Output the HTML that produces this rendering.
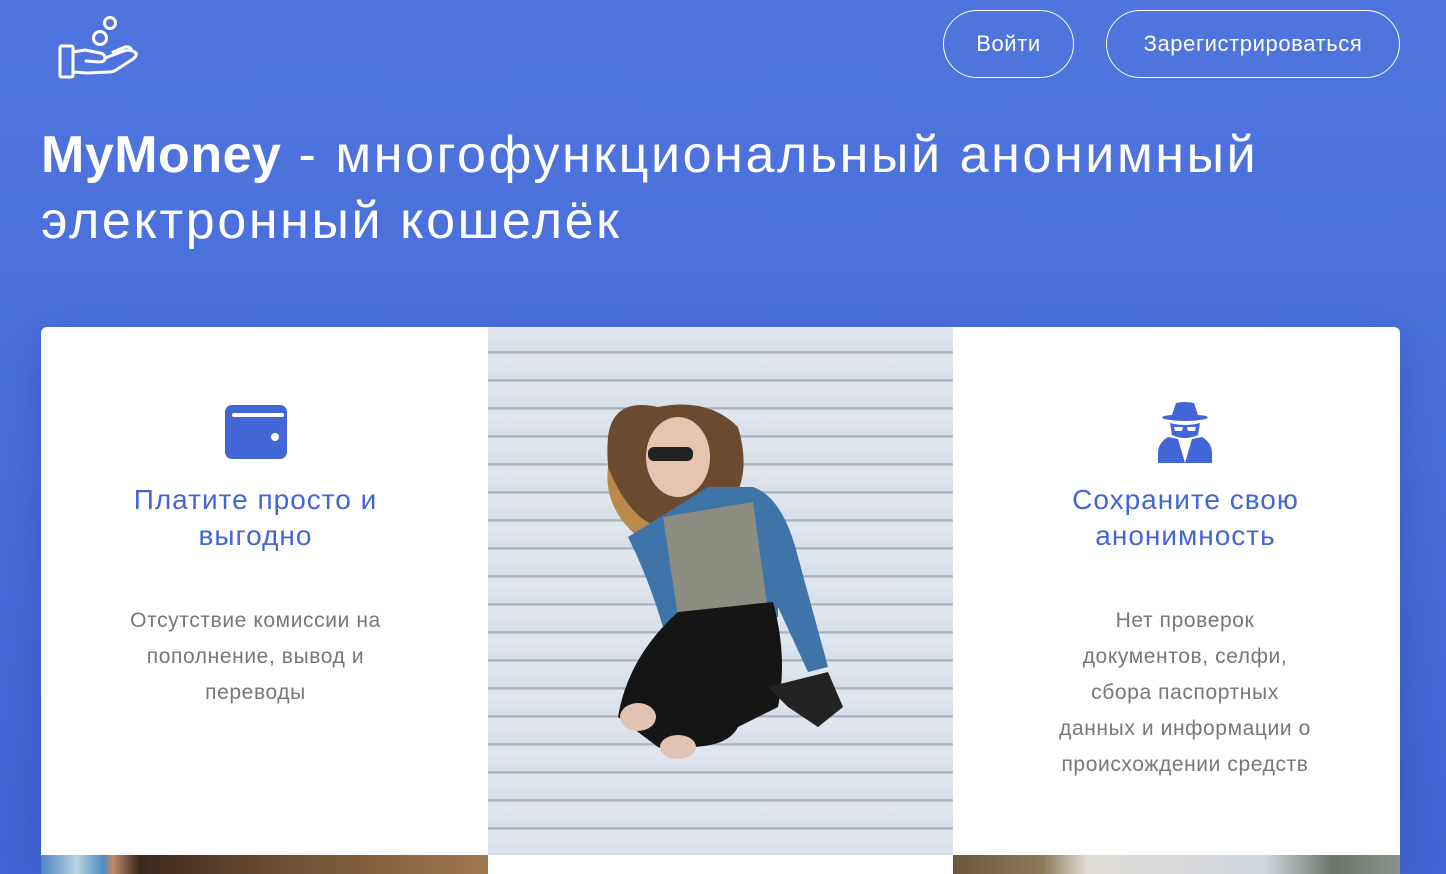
<!DOCTYPE html>
<html><head><meta charset="utf-8"><style>
*{margin:0;padding:0;box-sizing:border-box}
body{width:1446px;height:874px;overflow:hidden;background:linear-gradient(180deg,#5075de 0%,#4a6fdb 40%,#4165d2 100%);font-family:"Liberation Sans",sans-serif;position:relative;color:#fff}
.btn{position:absolute;top:10px;height:68px;border:1.5px solid #fff;border-radius:34px;font-size:22px;letter-spacing:0.6px;display:flex;align-items:center;justify-content:center;color:#fff}
h1{position:absolute;left:41px;top:122px;font-size:52px;font-weight:400;line-height:66px;letter-spacing:2.6px;white-space:nowrap}
h1 b{font-weight:700;letter-spacing:0.5px}
.card{position:absolute;left:41px;top:327px;width:1359px;height:528px;background:#fff;border-radius:6px 6px 0 0;overflow:hidden;box-shadow:0 10px 40px rgba(30,50,140,.3)}
.col{position:absolute;top:0;width:447px;height:528px;text-align:center}
.t{color:#4366d6;font-size:28px;line-height:36px;letter-spacing:1px}
.d{color:#777;font-size:21px;line-height:36px;letter-spacing:0.6px}
.photo{position:absolute;left:447px;top:0;width:465px;height:528px;background:repeating-linear-gradient(180deg,#e2e7ef 0,#d8dee8 24px,#9aa0aa 25px,#d8dee8 27px,#e2e7ef 28px)}
</style></head><body>
<svg style="position:absolute;left:55px;top:14px" width="86" height="68" viewBox="0 0 86 68" fill="none" stroke="#fff" stroke-width="3" stroke-linejoin="round" stroke-linecap="round">
<circle cx="55" cy="9" r="5.5"/><circle cx="45" cy="24" r="6.5"/>
<rect x="5" y="32" width="13" height="31" rx="1.5"/>
<path d="M18 38 L30 36 L45 39 Q50 40 50 44 Q50 48 44 48 L31 47 M50 44 L66 38 Q75 34 81 39 Q82 42 78 45 L61 56 Q58 58 54 58 L32 59 L18 58"/>
<path d="M58 38 L70 33 Q74 32 76 35"/>
</svg>
<div class="btn" style="left:943px;width:131px">Войти</div>
<div class="btn" style="left:1106px;width:294px">Зарегистрироваться</div>
<h1><b>MyMoney</b> - многофункциональный анонимный<br>электронный кошелёк</h1>
<div class="card">
<div class="col" style="left:-9px">
<svg style="position:absolute;left:193px;top:78px" width="62" height="54" viewBox="0 0 62 54"><rect x="0" y="0" width="62" height="54" rx="7" fill="#4366d6"/><rect x="7" y="8" width="52" height="4" rx="2" fill="#fff"/><circle cx="50" cy="32" r="4" fill="#fff"/></svg>
<div class="t" style="position:absolute;top:155px;width:100%">Платите просто и<br>выгодно</div>
<div class="d" style="position:absolute;top:276px;left:68px;width:311px">Отсутствие комиссии на пополнение, вывод и переводы</div>
</div>
<div class="photo">
<svg width="465" height="528" viewBox="0 0 465 528" style="position:absolute;left:0;top:0">
<path d="M120 110 Q125 70 170 80 Q220 70 250 100 Q265 150 240 180 L150 200 Q115 170 120 110Z" fill="#6b4a30"/>
<path d="M120 140 Q140 190 170 200 L150 210 Q115 180 120 140Z" fill="#b98a4a"/>
<ellipse cx="190" cy="130" rx="32" ry="40" fill="#e8c4b0"/>
<rect x="160" y="120" width="45" height="14" rx="6" fill="#222"/>
<path d="M140 210 L220 160 L265 160 Q295 170 310 230 L340 340 L320 345 L290 280 L290 290 L175 300 Q160 250 140 210Z" fill="#3e74a8"/>
<path d="M175 190 L265 175 L280 285 L190 290Z" fill="#8a8d80"/>
<path d="M190 285 L285 275 Q300 330 290 380 L250 400 Q240 420 200 420 Q190 430 170 420 L130 390 Q140 330 190 285Z" fill="#151515"/>
<path d="M280 360 L340 345 L355 380 L330 400 L300 380Z" fill="#222"/>
<ellipse cx="150" cy="390" rx="18" ry="14" fill="#e2c2b0"/>
<ellipse cx="190" cy="420" rx="18" ry="12" fill="#e2c2b0"/>
</svg>
</div>
<div class="col" style="left:921px">
<svg style="position:absolute;left:196px;top:74px" width="54" height="62" viewBox="0 0 54 62" fill="#4366d6"><path d="M14 14 L18 2 Q27 0 36 2 L40 14 Q54 15 48 18 Q27 22 6 18 Q0 15 14 14Z"/><path d="M12 22 Q27 26 42 22 L40 34 Q27 40 14 34Z"/><path d="M16 26 L25 26 L24 30 L17 30Z M29 26 L38 26 L37 30 L30 30Z" fill="#fff"/><path d="M10 36 L20 38 L27 62 L34 38 L44 36 Q54 42 54 52 L54 62 L0 62 L0 52 Q0 42 10 36Z"/><path d="M22 40 L27 60 L32 40 L27 44Z" fill="#fff"/></svg>
<div class="t" style="position:absolute;top:155px;width:100%">Сохраните свою<br>анонимность</div>
<div class="d" style="position:absolute;top:276px;left:88px;width:270px">Нет проверок документов, селфи, сбора паспортных данных и информации о происхождении средств</div>
</div>
</div>
<div style="position:absolute;left:41px;top:855px;width:447px;height:19px;background:linear-gradient(90deg,#4f86c0 0,#b8d4e4 8%,#4c8abd 14%,#c08a6a 16%,#3a2a1c 22%,#6a4a30 50%,#a07850 100%)"></div>
<div style="position:absolute;left:488px;top:855px;width:465px;height:19px;background:#fff"></div>
<div style="position:absolute;left:953px;top:855px;width:447px;height:19px;background:linear-gradient(90deg,#6a5a3c 0,#8a7a58 20%,#e0dcd6 30%,#cfd6de 70%,#6a7468 85%,#8a948c 100%)"></div>
</body></html>
